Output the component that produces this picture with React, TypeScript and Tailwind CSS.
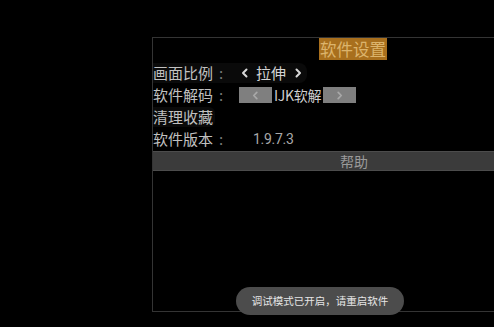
import React from "react";

const Chevron = ({ dir, color = "#d8d8d8", size = 8 }: { dir: "l" | "r"; color?: string; size?: number }) => (
  <svg width={size} height={size + 2} viewBox="0 0 8 10" fill="none">
    <path
      d={dir === "l" ? "M5.5 1.5 L2 5 L5.5 8.5" : "M2.5 1.5 L6 5 L2.5 8.5"}
      stroke={color}
      strokeWidth="2"
      strokeLinecap="round"
      strokeLinejoin="round"
    />
  </svg>
);

export default function App() {
  return (
    <div
      className="relative w-[494px] h-[327px] overflow-hidden bg-black pl-[152px] pt-[37px]"
      style={{ fontFamily: "'Noto Sans CJK SC', 'Noto Sans', sans-serif" }}
    >
      <div className="h-[275px] border border-r-0 border-[#343434] flex flex-col">
        <div className="h-[24px] flex items-start pl-[166px]">
          <div className="w-[68px] h-[22px] bg-[#a86f1d] text-[#dcb46c] text-[16.5px] leading-[22px] text-center">
            软件设置
          </div>
        </div>
        <div className="h-[22px] flex items-center">
          <div className="h-[20px] w-[154px] rounded-r-[8px] bg-[#0a0a0a] flex items-center text-[#c0c0c0] text-[15px] leading-[20px]">
            <span className="w-[66px]">画面比例</span>
            <span className="w-[22px] text-[#7a7a7a]">:</span>
            <Chevron dir="l" />
            <span className="ml-[7px] mr-[8px] text-[#d4d4d4]">拉伸</span>
            <Chevron dir="r" />
          </div>
        </div>
        <div className="h-[22px] flex items-center text-[#c0c0c0] text-[15px] leading-[20px]">
          <span className="w-[66px]">软件解码</span>
          <span className="w-[20px] text-[#7a7a7a]">:</span>
          <div className="w-[33px] h-[16px] bg-[#7f7f7f] flex items-center justify-center">
            <Chevron dir="l" color="#a8a8a8" size={7} />
          </div>
          <span className="px-[2px] text-[14px] tracking-[-0.3px] text-[#cfcfcf]">IJK软解</span>
          <div className="w-[33px] h-[16px] bg-[#7f7f7f] flex items-center justify-center">
            <Chevron dir="r" color="#a8a8a8" size={7} />
          </div>
        </div>
        <div className="h-[22px] flex items-center text-[#c0c0c0] text-[15px] leading-[20px]">
          <span className="bg-[#0a0a0a] rounded-r-[6px] pr-[2px]">清理收藏</span>
        </div>
        <div className="h-[22px] flex items-center text-[#c0c0c0] text-[15px] leading-[20px]">
          <span className="w-[66px]">软件版本</span>
          <span className="w-[34px] text-[#7a7a7a]">:</span>
          <span className="text-[14px] text-[#a8a8a8] tracking-[-0.3px]" style={{ fontFamily: "Roboto, sans-serif" }}>
            1.9.7.3
          </span>
        </div>
        <div className="mt-[1px] h-[20px] bg-[#3b3b3b] border-y border-[#4c4c4c] flex items-center pl-[187px] text-[14px] leading-[18px] text-[#9a9a9a]">
          帮助
        </div>
      </div>
      <div className="absolute left-[236px] top-[287px] w-[168px] h-[28px] rounded-full bg-[#4c4c4c] flex items-center justify-center text-[10.5px] text-[#e6e6e6]">
        调试模式已开启，请重启软件
      </div>
    </div>
  );
}
